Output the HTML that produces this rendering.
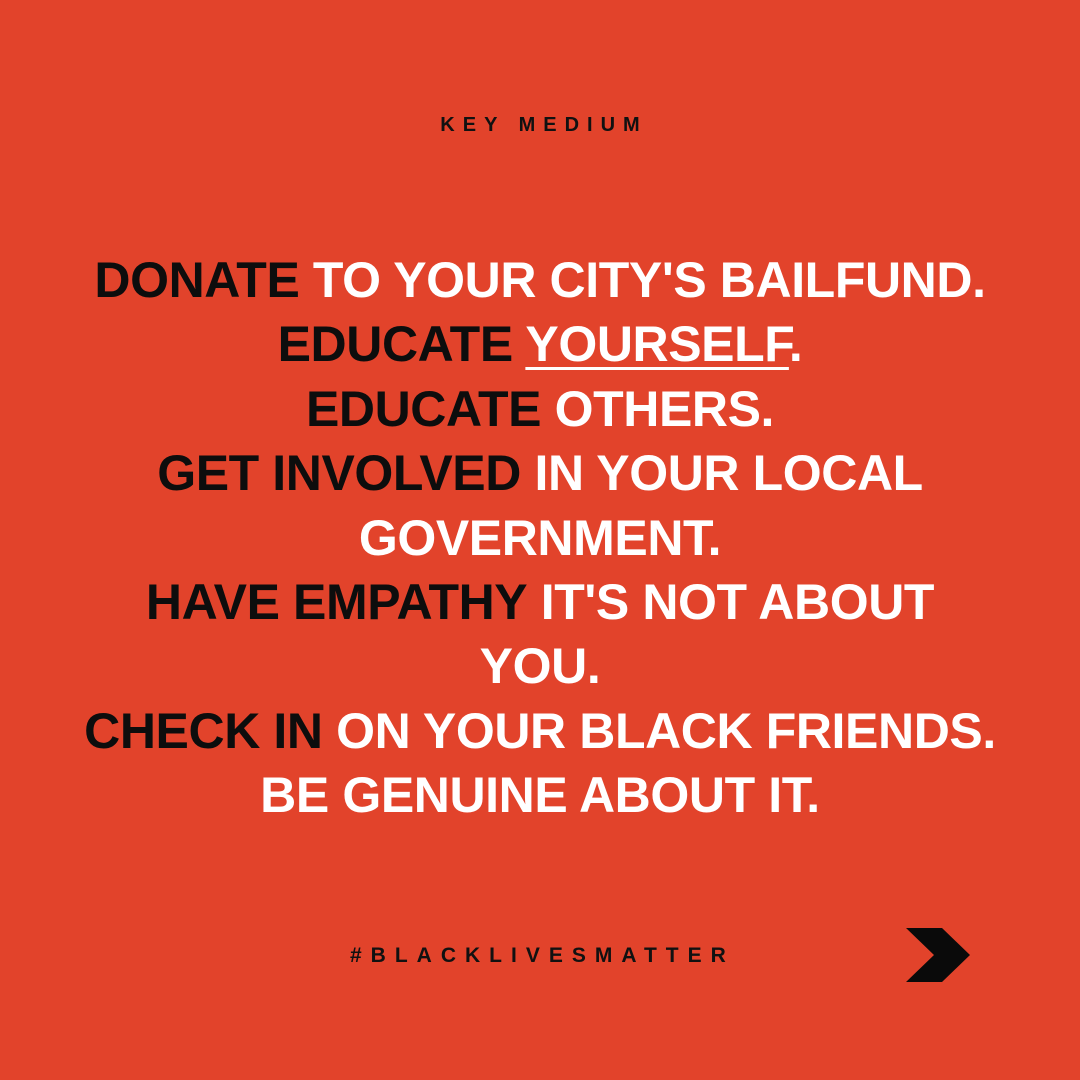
<!DOCTYPE html>
<html><head><style>
html,body{margin:0;padding:0}
body{width:1080px;height:1080px;background:#E2432B;position:relative;overflow:hidden;font-family:"Liberation Sans",Arial,sans-serif;font-weight:bold}
.top{position:absolute;top:114px;left:0;width:1080px;text-align:center;font-size:20px;letter-spacing:8px;color:#111;padding-left:8px;box-sizing:border-box}
.main{position:absolute;top:248px;left:0;width:1080px;text-align:center;font-size:50px;line-height:64.4px;color:#fff;letter-spacing:-0.4px}
.main b{color:#0d0d0d}
.main u{text-decoration-thickness:3px;text-underline-offset:6px}
.tag{position:absolute;top:944px;left:350px;font-size:21px;letter-spacing:9px;color:#111}
</style></head><body>
<div class="top">KEY MEDIUM</div>
<div class="main">
<b>DONATE</b> TO YOUR CITY'S BAILFUND.<br>
<b>EDUCATE</b> <u>YOURSELF</u>.<br>
<b>EDUCATE</b> OTHERS.<br>
<b>GET INVOLVED</b> IN YOUR LOCAL<br>
GOVERNMENT.<br>
<b>HAVE EMPATHY</b> IT'S NOT ABOUT<br>
YOU.<br>
<b>CHECK IN</b> ON YOUR BLACK FRIENDS.<br>
BE GENUINE ABOUT IT.
</div>
<div class="tag">#BLACKLIVESMATTER</div>
<svg style="position:absolute;left:0;top:0" width="1080" height="1080"><polygon points="906,928 942,928 970,955 942,982 906,982 934,955" fill="#0a0a0a"/></svg>
</body></html>
